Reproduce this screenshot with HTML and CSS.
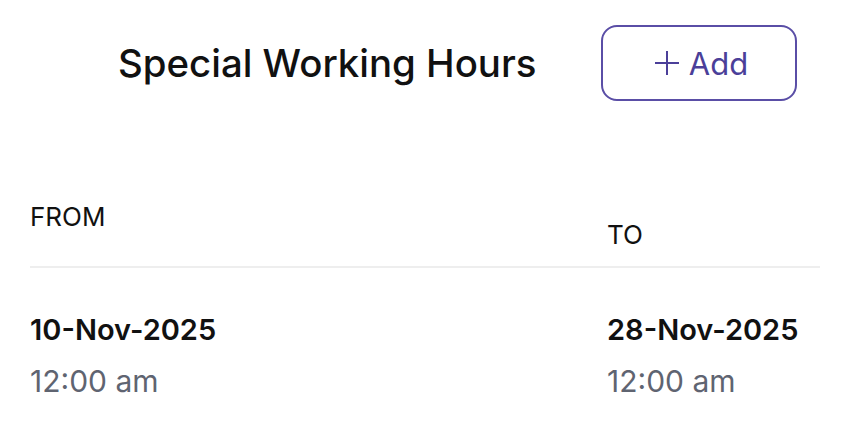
FILE: index.html
```html
<!DOCTYPE html>
<html>
<head>
<meta charset="utf-8">
<link rel="stylesheet" href="styles.css">
</head>
<body>
<div class="page">
  <div class="header">
    <h1 class="title">Special Working Hours</h1>
    <button class="add-btn"><svg class="plus" width="26" height="26" viewBox="0 0 26 26"><path d="M13 1v24M1 13h24" stroke="#4b3f99" stroke-width="2" fill="none"/></svg><span>Add</span></button>
  </div>
  <div class="table">
    <div class="head">
      <div class="th th-from">FROM</div>
      <div class="th th-to">TO</div>
    </div>
    <div class="row">
      <div class="cell">
        <div class="date">10-Nov-2025</div>
        <div class="time">12:00 am</div>
      </div>
      <div class="cell">
        <div class="date">28-Nov-2025</div>
        <div class="time">12:00 am</div>
      </div>
    </div>
  </div>
</div>
</body>
</html>
```
FILE: styles.css
```css
html, body {
  margin: 0;
  padding: 0;
  background: #ffffff;
}
body {
  font-family: Inter, "Noto Sans", sans-serif;
  color: #111111;
}
.page {
  width: 848px;
  height: 436px;
  box-sizing: border-box;
  padding: 25px 28px 0 30px;
}
.header {
  display: flex;
  align-items: center;
  height: 76px;
  padding-left: 88px;
}
.title {
  margin: 0;
  font-size: 38.4px;
  font-weight: 500;
  letter-spacing: 0;
  flex: 1;
}
.add-btn {
  width: 196px;
  height: 76px;
  box-sizing: border-box;
  border: 2px solid #5a4ea6;
  border-radius: 16px;
  background: #fff;
  color: #4b3f99;
  font-family: inherit;
  font-size: 31px;
  font-weight: 400;
  display: flex;
  align-items: center;
  justify-content: center;
  gap: 9px;
  margin-right: 23px;
  padding: 0 0 0 4px;
}
.plus {
  display: block;
}
.table {
  margin-top: 100px;
}
.head {
  display: grid;
  grid-template-columns: 1fr 213px;
  height: 65px;
  border-bottom: 2px solid #eeeeee;
}
.th {
  font-size: 26px;
  font-weight: 400;
}
.th-to {
  padding-top: 18px;
}
.row {
  display: grid;
  grid-template-columns: 1fr 213px;
  padding-top: 44px;
}
.date {
  font-size: 29px;
  font-weight: 600;
}
.time {
  margin-top: 16px;
  font-size: 30px;
  color: #5f6471;
}
```
